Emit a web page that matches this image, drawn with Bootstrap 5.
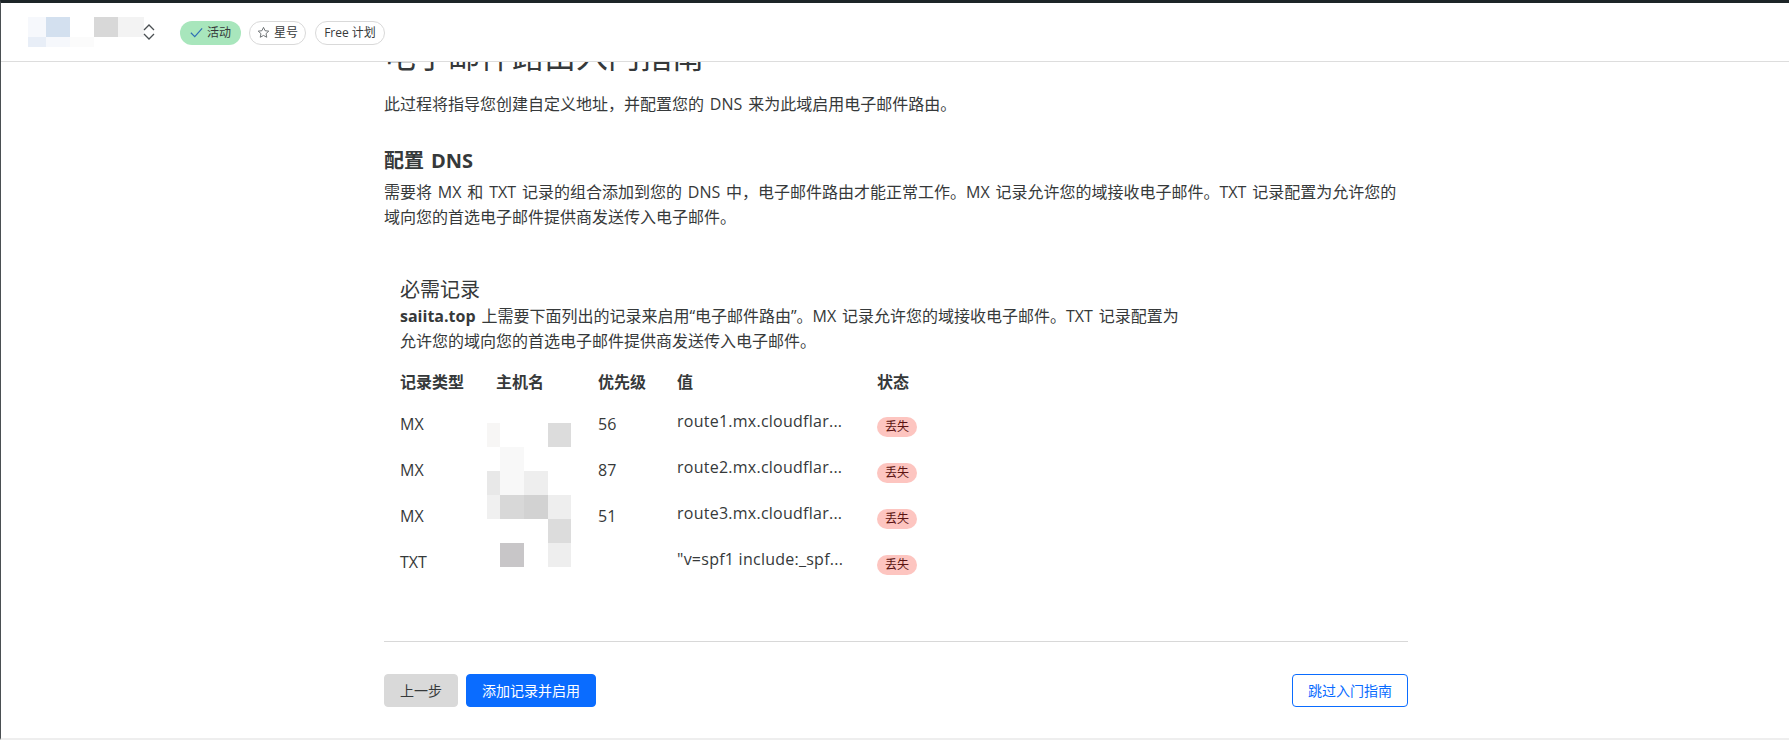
<!DOCTYPE html>
<html lang="zh-CN">

<head>
    <meta charset="UTF-8">
    <title>电子邮件路由入门指南</title>
    <link rel="stylesheet" href="https://cdn.jsdelivr.net/npm/bootstrap@5.3.3/dist/css/bootstrap.min.css">
    <style>
        html, body { height: 100%; }
        body {
            font-family: "Open Sans", "Noto Sans CJK SC", sans-serif;
            color: #36393a;
            font-size: 16px;
            word-spacing: 1.7px;
            overflow: hidden;
            border-top: 3px solid #1d2528;
            border-left: 1px solid #4a4f52;
            border-bottom: 2px solid #eee;
        }
        .top-bar { height: 59px; padding-left: 27px; border-bottom: 1px solid #ddd; flex: none; background: #fff; position: relative; z-index: 2; }
        .account-mosaic { width: 122px; height: 30px; }
        .chevrons { width: 14px; height: 18px; margin-left: -8px; margin-right: 24px; }
        .pills { gap: 8px; margin-top: 1px; }
        .pill { height: 24px; font-size: 12px; border-radius: 12px; color: #36393a; gap: 4px; white-space: nowrap; justify-content: center; word-spacing: 0; }
        .pill-active { background: #a8e6bc; border: 0; width: 61px; }
        .pill-line { border: 1px solid #d9d9d9; background: #fff; }
        .pill-star { width: 57px; }
        .pill-plan { width: 70px; margin-left: 1px; }
        .guide { width: 1024px; margin-left: 383px; }
        .guide h1 { font-size: 32px; font-weight: 400; line-height: 40px; margin: -26px 0 0; height: 40px; }
        .intro { margin: 16px 0 0; line-height: 24px; }
        .guide h2 { font-size: 20px; font-weight: 700; line-height: 28px; margin: 31px 0 0; }
        .dns-text { margin: 5px 0 0; line-height: 25px; }
        .records { margin: 46px 0 0 16px; width: 800px; position: relative; }
        .records h3 { font-size: 20px; font-weight: 400; line-height: 28px; margin: 0; }
        .records p { margin: 0; line-height: 25px; width: 780px; }
        .record-table { width: auto; margin: 9px 0 0; table-layout: fixed; color: inherit; }
        .record-table th, .record-table td { padding: 0; border: 0; height: 46px; vertical-align: middle; font-weight: 400; box-shadow: none; }
        .record-table th { font-weight: 700; height: 38px; }
        .record-table .val { padding-bottom: 6px; letter-spacing: .25px; word-spacing: 0; }
        .badge-missing { background: #fdc5c0; color: #5b1210; font-size: 12px; font-weight: 400; border-radius: 10px; width: 40px; height: 20px; line-height: 20px; text-align: center; display: block; margin-top: 5px; }
        .mosaic { position: absolute; left: 87px; top: 147px; width: 84px; height: 144px; }
        .guide hr { margin: 56px 0 0; border-color: #d8d8d8; opacity: 1; }
        .actions { margin-top: 32px; }
        .actions .btn { height: 33px; font-size: 14px; padding: 0; border-radius: 4px; line-height: 31px; }
        .btn-back { background: #d9d9d9; border-color: #d9d9d9; color: #36393a; width: 74px; }
        .btn-go { background: #0a6cff; border-color: #0a6cff; color: #fff; width: 130px; }
        .btn-skip { background: #fff; border-color: #0a6cff; color: #0a6cff; width: 116px; }
    </style>
</head>

<body class="d-flex flex-column">
    <!-- barra superior -->
    <header class="top-bar d-flex align-items-center">
        <svg class="account-mosaic" viewBox="0 0 122 30">
            <rect x="0" y="0" width="18" height="20" fill="#f6f8fc"/>
            <rect x="18" y="0" width="24" height="20" fill="#d3e0ef"/>
            <rect x="0" y="20" width="18" height="10" fill="#e8eef7"/>
            <rect x="18" y="20" width="24" height="10" fill="#f6f8fc"/>
            <rect x="42" y="20" width="24" height="10" fill="#fbfbfb"/>
            <rect x="66" y="0" width="24" height="20" fill="#d8d8d8"/>
            <rect x="90" y="0" width="26" height="20" fill="#f3f3f3"/>
        </svg>
        <svg class="chevrons" viewBox="0 0 14 18" fill="none" stroke="#4a4f52" stroke-width="1.3">
            <path d="M2 7l5-5 5 5"/>
            <path d="M2 11l5 5 5-5"/>
        </svg>
        <div class="pills d-flex">
            <span class="pill pill-active d-inline-flex align-items-center">
                <svg width="13" height="13" viewBox="0 0 12 12" fill="none" stroke="#2f6fb5" stroke-width="1.1"><path d="M.8 6.2l3.6 3.6 6.8-7.6"/></svg>活动
            </span>
            <span class="pill pill-line pill-star d-inline-flex align-items-center">
                <svg width="13" height="13" viewBox="0 0 24 24" fill="none" stroke="#6c7073" stroke-width="1.8"><path d="M12 2.5l2.9 6.2 6.8.8-5 4.6 1.3 6.7-6-3.4-6 3.4 1.3-6.7-5-4.6 6.8-.8z"/></svg>星号
            </span>
            <span class="pill pill-line pill-plan d-inline-flex align-items-center">Free 计划</span>
        </div>
    </header>

    <main class="flex-grow-1 overflow-hidden">
        <div class="guide">
            <h1>电子邮件路由入门指南</h1>
            <p class="intro">此过程将指导您创建自定义地址，并配置您的 DNS 来为此域启用电子邮件路由。</p>

            <h2>配置 DNS</h2>
            <p class="dns-text">需要将 MX 和 TXT 记录的组合添加到您的 DNS 中，电子邮件路由才能正常工作。MX 记录允许您的域接收电子邮件。TXT 记录配置为允许您的<br>域向您的首选电子邮件提供商发送传入电子邮件。</p>

            <!-- registros -->
            <section class="records">
                <h3>必需记录</h3>
                <p><strong>saiita.top</strong> 上需要下面列出的记录来启用“电子邮件路由”。MX 记录允许您的域接收电子邮件。TXT 记录配置为允许您的域向您的首选电子邮件提供商发送传入电子邮件。</p>
                <table class="table record-table">
                    <colgroup>
                        <col style="width:96px"><col style="width:102px"><col style="width:79px"><col style="width:200px"><col style="width:60px">
                    </colgroup>
                    <tr><th>记录类型</th><th>主机名</th><th>优先级</th><th>值</th><th>状态</th></tr>
                    <tr><td>MX</td><td></td><td>56</td><td class="val">route1.mx.cloudflar...</td><td><span class="badge-missing">丢失</span></td></tr>
                    <tr><td>MX</td><td></td><td>87</td><td class="val">route2.mx.cloudflar...</td><td><span class="badge-missing">丢失</span></td></tr>
                    <tr><td>MX</td><td></td><td>51</td><td class="val">route3.mx.cloudflar...</td><td><span class="badge-missing">丢失</span></td></tr>
                    <tr><td>TXT</td><td></td><td></td><td class="val">"v=spf1 include:_spf...</td><td><span class="badge-missing">丢失</span></td></tr>
                </table>
                <!-- nombres de host tapados -->
                <svg class="mosaic" viewBox="0 0 84 144">
                    <rect x="0" y="0" width="13" height="24" fill="#f7f6f5"/>
                    <rect x="61" y="0" width="23" height="24" fill="#dcdcdc"/>
                    <rect x="13" y="24" width="24" height="24" fill="#f8f8f8"/>
                    <rect x="0" y="48" width="13" height="24" fill="#e8e8e8"/>
                    <rect x="13" y="48" width="24" height="24" fill="#f8f8f8"/>
                    <rect x="37" y="48" width="24" height="24" fill="#eeeeee"/>
                    <rect x="0" y="72" width="13" height="24" fill="#f0f0f0"/>
                    <rect x="13" y="72" width="24" height="24" fill="#d8d8d8"/>
                    <rect x="37" y="72" width="24" height="24" fill="#d2d2d2"/>
                    <rect x="61" y="72" width="23" height="24" fill="#eeeeee"/>
                    <rect x="61" y="96" width="23" height="24" fill="#dcdcdc"/>
                    <rect x="13" y="120" width="24" height="24" fill="#c8c6c8"/>
                    <rect x="61" y="120" width="23" height="24" fill="#eeeeee"/>
                </svg>
            </section>

            <hr>
            <div class="actions d-flex">
                <button class="btn btn-back me-2">上一步</button>
                <button class="btn btn-go">添加记录并启用</button>
                <button class="btn btn-skip ms-auto">跳过入门指南</button>
            </div>
        </div>
    </main>

    <script src="https://cdn.jsdelivr.net/npm/bootstrap@5.3.3/dist/js/bootstrap.bundle.min.js"></script>
</body>

</html>
